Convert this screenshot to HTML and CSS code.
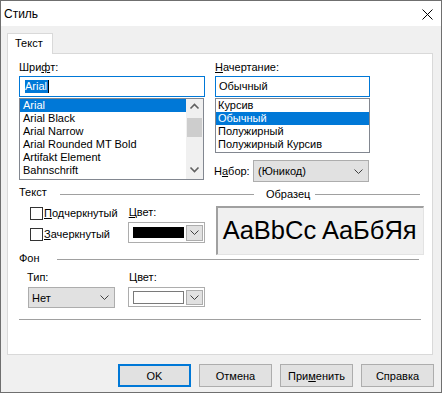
FILE: index.html
```html
<!DOCTYPE html>
<html lang="ru">
<head>
<meta charset="utf-8">
<title>Стиль</title>
<link rel="stylesheet" href="styles.css">
</head>
<body>
<div class="window">
  <div class="titlebar">
    <span class="title">Стиль</span>
    <svg class="close" width="11" height="11" viewBox="0 0 11 11"><path d="M0.5 0.5 L10.5 10.5 M10.5 0.5 L0.5 10.5" stroke="#000" stroke-width="1" fill="none"/></svg>
  </div>
  <div class="body">
    <div class="tabs"><div class="tab">Текст</div></div>
    <div class="panel">
      <div class="top">
        <div class="col-font">
          <div class="lbl">Шри<u>ф</u>т:</div>
          <div class="input focused"><span class="sel">Arial</span><span class="caret"></span></div>
          <div class="list font-list">
            <div class="items">
              <div class="row selected">Arial</div>
              <div class="row">Arial Black</div>
              <div class="row">Arial Narrow</div>
              <div class="row">Arial Rounded MT Bold</div>
              <div class="row">Artifakt Element</div>
              <div class="row">Bahnschrift</div>
            </div>
            <div class="scrollbar">
              <div class="sb-btn"><svg width="17" height="17" viewBox="0 0 17 17"><polyline points="4.5,9.5 8.5,5.5 12.5,9.5" fill="none" stroke="#606060" stroke-width="1.6"/></svg></div>
              <div class="sb-track"><div class="sb-thumb"></div></div>
              <div class="sb-btn"><svg width="17" height="17" viewBox="0 0 17 17"><polyline points="4.5,5.5 8.5,9.5 12.5,5.5" fill="none" stroke="#606060" stroke-width="1.6"/></svg></div>
            </div>
          </div>
        </div>
        <div class="col-style">
          <div class="lbl"><u>Н</u>ачертание:</div>
          <div class="input focused"><span class="val">Обычный</span></div>
          <div class="list style-list">
            <div class="row">Курсив</div>
            <div class="row selected">Обычный</div>
            <div class="row">Полужирный</div>
            <div class="row">Полужирный Курсив</div>
          </div>
          <div class="charset">
            <span class="charset-lbl">Н<u>а</u>бор:</span>
            <div class="combo charset-combo">
              <span class="combo-text">(Юникод)</span>
              <svg class="chev" width="9" height="5" viewBox="0 0 9 5"><polyline points="0.5,0.5 4.5,4.5 8.5,0.5" fill="none" stroke="#404040" stroke-width="1"/></svg>
            </div>
          </div>
        </div>
      </div>

      <div class="group-head">
        <span class="gh-text">Текст</span>
        <span class="gh-line w194"></span>
        <span class="gh-text gh-sample">Образец</span>
        <span class="gh-line w105"></span>
      </div>
      <div class="text-body">
        <div class="checks">
          <div class="check-row"><span class="box"></span><span><u>П</u>одчеркнутый</span></div>
          <div class="check-row"><span class="box"></span><span><u>З</u>ачеркнутый</span></div>
        </div>
        <div class="color-col">
          <div class="small-lbl"><u>Ц</u>вет:</div>
          <div class="color-combo">
            <span class="swatch black"></span>
            <span class="drop"><svg width="9" height="5" viewBox="0 0 9 5"><polyline points="0.5,0.5 4.5,4.5 8.5,0.5" fill="none" stroke="#404040" stroke-width="1"/></svg></span>
          </div>
        </div>
        <div class="sample">AaBbCc AaБбЯя</div>
      </div>

      <div class="group-head fon-head">
        <span class="gh-text fon-text">Фон</span>
        <span class="gh-line w362"></span>
      </div>
      <div class="fon-body">
        <div class="type-col">
          <div class="small-lbl">Тип:</div>
          <div class="combo type-combo">
            <span class="combo-text">Нет</span>
            <svg class="chev" width="9" height="5" viewBox="0 0 9 5"><polyline points="0.5,0.5 4.5,4.5 8.5,0.5" fill="none" stroke="#404040" stroke-width="1"/></svg>
          </div>
        </div>
        <div class="color-col2">
          <div class="small-lbl">Цвет:</div>
          <div class="color-combo short">
            <span class="swatch white"></span>
            <span class="drop"><svg width="9" height="5" viewBox="0 0 9 5"><polyline points="0.5,0.5 4.5,4.5 8.5,0.5" fill="none" stroke="#404040" stroke-width="1"/></svg></span>
          </div>
        </div>
      </div>
      <div class="separator"></div>
    </div>

    <div class="buttons">
      <button class="btn default">OK</button>
      <button class="btn">Отмена</button>
      <button class="btn">При<u>м</u>енить</button>
      <button class="btn">Справка</button>
    </div>
  </div>
</div>
</body>
</html>
```

FILE: styles.css
```css
* { box-sizing: border-box; }
html, body { margin: 0; padding: 0; }
body {
  font-family: "Liberation Sans", Arial, sans-serif;
  font-size: 11px;
  color: #000;
  background: #fff;
}
u { text-decoration: underline; text-underline-offset: 1px; }

.window {
  width: 442px;
  height: 393px;
  border: 1px solid #6f6f6f;
  background: #f0f0f0;
  display: flex;
  flex-direction: column;
}
.titlebar {
  height: 25px;
  background: #fff;
  display: flex;
  align-items: center;
  justify-content: space-between;
  padding: 0 8px 0 3px;
}
.title { font-size: 12px; }
.close { display: block; margin-top: 2px; }

.body {
  flex: 1;
  display: flex;
  flex-direction: column;
  padding: 7px 8px 0 6px;
}
.tabs { height: 20px; display: flex; }
.tab {
  width: 46px;
  height: 21px;
  border: 1px solid #d9d9d9;
  border-bottom: none;
  background: #fff;
  padding: 1px 0 0 7px;
  line-height: 16px;
  position: relative;
  z-index: 1;
}
.panel {
  height: 302px;
  border: 1px solid #d9d9d9;
  background: #fff;
  padding: 6px 8px 0 11px;
}

/* top section */
.top { display: flex; gap: 10px; }
.col-font { width: 186px; }
.col-style { width: 155px; }
.lbl { height: 15px; line-height: 15px; margin-bottom: 1px; }
.input {
  height: 21px;
  background: #fff;
  border: 1px solid #0078d7;
  display: flex;
  align-items: center;
}
.input .sel {
  margin-left: 5px;
  background: #0078d7;
  color: #fff;
  line-height: 13px;
  padding: 0 1px 0 0;
}
.input .caret { width: 1px; height: 13px; background: #000; }
.input .val { margin-left: 3px; line-height: 13px; }

.list {
  margin-top: 1px;
  border: 1px solid #828790;
  background: #fff;
}
.row { height: 13px; line-height: 13px; padding-left: 3px; white-space: nowrap; }
.row.selected { background: #0078d7; color: #fff; }
.font-list { width: 185px; height: 82px; display: flex; }
.font-list .items { width: 166px; }
.scrollbar {
  width: 17px;
  height: 80px;
  background: #f0f0f0;
  display: flex;
  flex-direction: column;
}
.sb-btn { height: 17px; }
.sb-btn svg { display: block; }
.sb-track { flex: 1; }
.sb-thumb { margin: 2px 1px 0 1px; height: 19px; background: #cdcdcd; }

.style-list { height: 55px; }
.style-list .row { padding-left: 2px; }

.charset {
  display: flex;
  align-items: center;
  margin-top: 7px;
}
.charset-lbl { width: 39px; margin-left: -1px; line-height: 13px; }
.combo {
  background: #e1e1e1;
  border: 1px solid #adadad;
  display: flex;
  align-items: center;
  justify-content: space-between;
}
.chev { display: block; }
.charset-combo { width: 116px; height: 22px; padding: 0 5px 0 4px; }

/* group heads */
.group-head {
  display: flex;
  height: 13px;
  line-height: 13px;
  margin-top: 4px;
}
.gh-text { width: 41px; }
.gh-line { height: 1px; background: #a0a0a0; margin-top: 8px; }
.w194 { width: 194px; }
.w105 { width: 105px; }
.w362 { width: 362px; }
.gh-sample { width: 49px; margin-left: 12px; padding-top: 2px; }

.text-body { display: flex; }
.checks { width: 98px; margin-left: 11px; padding-top: 8px; }
.check-row { display: flex; align-items: center; height: 13px; line-height: 13px; margin-bottom: 8px; }
.box {
  width: 13px;
  height: 13px;
  border: 1px solid #333;
  background: #fff;
  margin-right: 1px;
}
.color-col { width: 77px; padding-top: 7px; }
.small-lbl { height: 13px; line-height: 13px; padding-left: 1px; }
.color-combo {
  margin-top: 3px;
  width: 77px;
  height: 21px;
  background: #fff;
  border: 1px solid #adadad;
  display: flex;
  align-items: center;
  padding: 0 1px 0 4px;
}
.swatch { display: block; }
.swatch.black { width: 51px; height: 11px; background: #000; }
.drop {
  width: 17px;
  height: 16px;
  margin-left: 2px;
  background: #e1e1e1;
  border: 1px solid #adadad;
  display: flex;
  align-items: center;
  justify-content: center;
}
.color-combo.short { height: 20px; }
.color-combo.short .swatch.white {
  width: 53px;
  height: 13px;
  background: #fff;
  border: 1px solid #7a7a7a;
}
.color-combo.short .drop { height: 15px; margin-left: 2px; }

.sample {
  margin-left: 11px;
  margin-top: 7px;
  width: 209px;
  height: 49px;
  background: #f0f0f0;
  border-style: solid;
  border-width: 2px 1px 1px 2px;
  border-color: #a0a0a0 #e3e3e3 #e3e3e3 #a0a0a0;
  font-size: 25.5px;
  display: flex;
  align-items: center;
  padding-left: 5px;
  padding-bottom: 2px;
  white-space: nowrap;
  overflow: hidden;
}

.fon-head { margin-top: -3px; }
.fon-text { width: 38px; }
.gh-line.w362 { margin-top: 7px; }

.fon-body { display: flex; margin-top: 6px; }
.type-col { margin-left: 8px; width: 88px; }
.type-col .small-lbl { padding-left: 0; }
.type-combo {
  margin-top: 3px;
  margin-left: 1px;
  width: 87px;
  height: 21px;
  padding: 0 5px 0 3px;
}
.color-col2 { margin-left: 13px; width: 77px; }

.separator {
  margin-top: 11px;
  width: 402px;
  height: 1px;
  background: #a0a0a0;
}

/* buttons */
.buttons {
  display: flex;
  justify-content: flex-end;
  gap: 8px;
  margin-top: 9px;
  margin-right: -1px;
}
.btn {
  width: 73px;
  height: 23px;
  background: #e1e1e1;
  border: 1px solid #adadad;
  font-family: "Liberation Sans", Arial, sans-serif;
  font-size: 11px;
  color: #000;
  padding: 0;
  margin: 0;
}
.btn.default { border: 2px solid #0078d7; }
```
